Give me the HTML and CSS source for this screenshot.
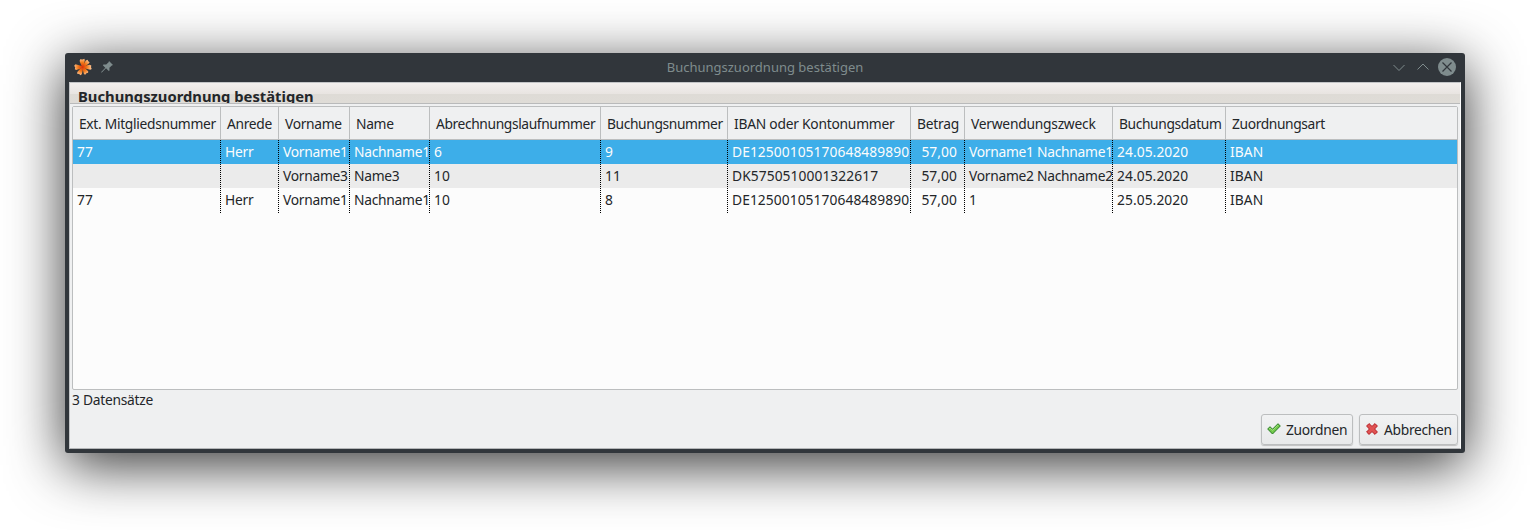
FILE: index.html
```html
<!DOCTYPE html>
<html lang="de">
<head>
<meta charset="utf-8">
<title>Buchungszuordnung bestätigen</title>
<link rel="stylesheet" href="styles.css">
</head>
<body>
<div class="window">
  <header class="titlebar">
    <svg class="app-icon" width="18" height="18" viewBox="0 0 18 18">
      <defs><radialGradient id="petal" gradientUnits="userSpaceOnUse" cx="8.500" cy="9" r="9"><stop offset="0" stop-color="#d8300a"/><stop offset=".5" stop-color="#f27a1a"/><stop offset="1" stop-color="#ffc797"/></radialGradient></defs>
      <g fill="url(#petal)">
        <path d="M8 9 5.600 3 6.200 1.200 8.500 1.600 10.300.8 10.800 2 9.600 9Z"/>
        <path d="M8.500 8.500 11.800 2.400 13.500 1.800 14.300 3.200 15.600 4.300 14.800 5.600 9.500 9.600Z"/>
        <path d="M9 8.200 15.500 6.800 17.300 7.500 17 9.300 17.700 11 16.300 11.700 9 10Z"/>
        <path d="M9.700 9 14.200 13.200 14.100 14.800 12.400 15.300 11.200 16.700 9.900 16 8.400 9.800Z"/>
        <path d="M9.300 9.600 7.800 16.300 6.400 17.300 5.200 16 3.200 15.800 3.300 14 8 8.800Z"/>
        <path d="M8.500 10 2.200 12 .8 11.300 1.200 9.600.2 7.800 1.500 6.300 8.500 8.300Z"/>
      </g>
    </svg>
    <svg class="pin-icon" width="12" height="12" viewBox="0 0 12 12"><path fill="#7f8c8d" d="M8 0 12 4 10.800 4.400 8.400 6.800 8.500 9.500 7.800 10 5 7.300.8 11.500H.2V10.900L4.300 6.700 1.800 4.200 2.500 3.500 5.200 3.600 7.600 1.200Z"/></svg>
    <h1 class="caption">Buchungszuordnung bestätigen</h1>
    <svg class="controls" width="68" height="20" viewBox="0 0 68 20" fill="none">
      <path stroke="#7f8c8d" d="m4.500 8 5.500 5.500L15.500 8M28.500 12.500 34 7l5.500 5.500"/>
      <circle cx="58" cy="10" r="9" fill="#7f8c8d"/>
      <path stroke="#31363b" stroke-width="1.200" d="m53.500 5.500 9 9m0-9-9 9"/>
    </svg>
  </header>
  <main class="content">
    <div class="panel-head"><h2 class="panel-title">Buchungszuordnung bestätigen</h2></div>
    <div class="table">
      <div class="row head">
        <span>Ext. Mitgliedsnummer</span><span>Anrede</span><span>Vorname</span><span>Name</span><span class="tight">Abrechnungslaufnummer</span><span class="tight">Buchungsnummer</span><span class="loose">IBAN oder Kontonummer</span><span class="loose">Betrag</span><span class="loose">Verwendungszweck</span><span class="tight">Buchungsdatum</span><span class="tight">Zuordnungsart</span>
      </div>
      <div class="row item selected">
        <span class="num">77</span><span>Herr</span><span>Vorname1</span><span>Nachname1</span><span class="num">6</span><span class="num">9</span><span class="num">DE12500105170648489890</span><span class="num amount">57,00</span><span>Vorname1 Nachname1</span><span class="num">24.05.2020</span><span class="num">IBAN</span>
      </div>
      <div class="row item alt">
        <span></span><span></span><span>Vorname3</span><span>Name3</span><span class="num">10</span><span class="num">11</span><span class="num">DK5750510001322617</span><span class="num amount">57,00</span><span>Vorname2 Nachname2</span><span class="num">24.05.2020</span><span class="num">IBAN</span>
      </div>
      <div class="row item last">
        <span class="num">77</span><span>Herr</span><span>Vorname1</span><span>Nachname1</span><span class="num">10</span><span class="num">8</span><span class="num">DE12500105170648489890</span><span class="num amount">57,00</span><span>1</span><span class="num">25.05.2020</span><span class="num">IBAN</span>
      </div>
    </div>
    <div class="status">3 Datensätze</div>
    <div class="actions">
      <button class="btn confirm">
        <svg width="14" height="12" viewBox="0 0 14 12"><path fill="#73c94b" stroke="#287d23" d="M.7 6 3 3.700l2.500 2.500L11 .7 13.300 3 5.500 11Z" stroke-linejoin="round"/><path d="m2 6 1-1 2.500 2.500L11 2" fill="none" stroke="#a5e284" stroke-width=".8"/></svg>
        Zuordnen
      </button>
      <button class="btn cancel">
        <svg width="12" height="12" viewBox="0 0 12 12"><path fill="#e05252" stroke="#b51f24" stroke-linejoin="round" d="M3 .6 6 3.400 9 .6 11.400 3 8.600 6l2.800 3L9 11.400 6 8.600 3 11.400.6 9 3.400 6 .6 3Z"/></svg>
        Abbrechen
      </button>
    </div>
  </main>
</div>
</body>
</html>
```
FILE: styles.css
```css
* { box-sizing: border-box; }
body {
  margin: 0;
  padding: 53px 65px 77px;
  height: 530px;
  overflow: hidden;
  background: #fff;
  color: #232629;
  font: 13.8px/24px "Noto Sans", sans-serif;
  letter-spacing: -.27px;
}
.window {
  height: 400px;
  padding: 0 4px 4px;
  border-radius: 3px;
  background: #31363b;
  box-shadow: 0 12px 56px rgba(0, 0, 0, .8);
}
.titlebar {
  display: flex;
  align-items: center;
  height: 29px;
  padding: 0 4px 2px 5px;
}
.app-icon { margin-right: 9px; }
.pin-icon { margin-right: 24px; }
.caption {
  flex: 1;
  margin: 0;
  padding-left: 4px;
  text-align: center;
  color: #7f8c8d;
  font-size: 13px;
  font-weight: 400;
  letter-spacing: 0;
}
.content {
  height: 367px;
  border: 1px solid;
  border-color: #c3c5c7 #fff #b4b6b8 #c3c5c7;
  background: #eff0f1;
}
.panel-head {
  height: 21px;
  overflow: hidden;
  border-bottom: 1px solid #b9babb;
  background: linear-gradient(#f3f0ee 0, #e8e4e1 11px, #dedbd6 11px, #dfdcd7 20px);
}
.panel-title {
  margin: 1px 0 0 8px;
  font-size: 14.78px;
  line-height: 24px;
  letter-spacing: 0;
}
.table {
  height: 284px;
  margin: 2px 2px 0;
  border: 1px solid #bcbebf;
  border-radius: 2px;
  background: #fcfcfc;
}
.row {
  display: grid;
  grid-template-columns: 148px 58px 71px 80px 171px 127px 183px 54px 148px 113px 1fr;
}
.row > span { white-space: nowrap; }
.head {
  height: 33px;
  border-bottom: 1px solid #bcbebf;
  background: #eff0f1;
  line-height: 34px;
  letter-spacing: -.31px;
}
.head > span { padding-left: 6px; border-right: 1px solid #bcbebf; }
.head > .tight { letter-spacing: -.38px; }
.head > .loose { letter-spacing: -.24px; }
.head > span:last-child { border-right: 0; }
.item { height: 24px; }
.item > span {
  padding-left: 4px;
  background: repeating-linear-gradient(#000 0 1px, transparent 1px 2px) right / 1px 100% no-repeat;
}
.last { height: 25px; }
.item > span:last-child { background: none; }
.num { letter-spacing: .07px; }
.row > .amount { padding: 0 8px 0 0; text-align: right; }
.selected { background-color: #3daee9; color: #fcfcfc; }
.alt { background-color: #ebebeb; }
.status { margin: -2px 0 0 2px; }
.actions {
  display: flex;
  justify-content: flex-end;
  gap: 6px;
  padding: 2px 2px 0 0;
}
.btn {
  display: flex;
  align-items: center;
  height: 31px;
  padding: 0 5px;
  border: 1px solid #bcbebf;
  border-radius: 3px;
  background: linear-gradient(#f1f2f3, #e8e9ea);
  box-shadow: 0 1px 1px rgba(0, 0, 0, .2);
  color: inherit;
  font: inherit;
  letter-spacing: -.3px;
}
.confirm { width: 92px; gap: 5px; }
.cancel { width: 99px; gap: 6px; padding-left: 6px; }
.btn svg { position: relative; top: -1px; flex: none; }
```
